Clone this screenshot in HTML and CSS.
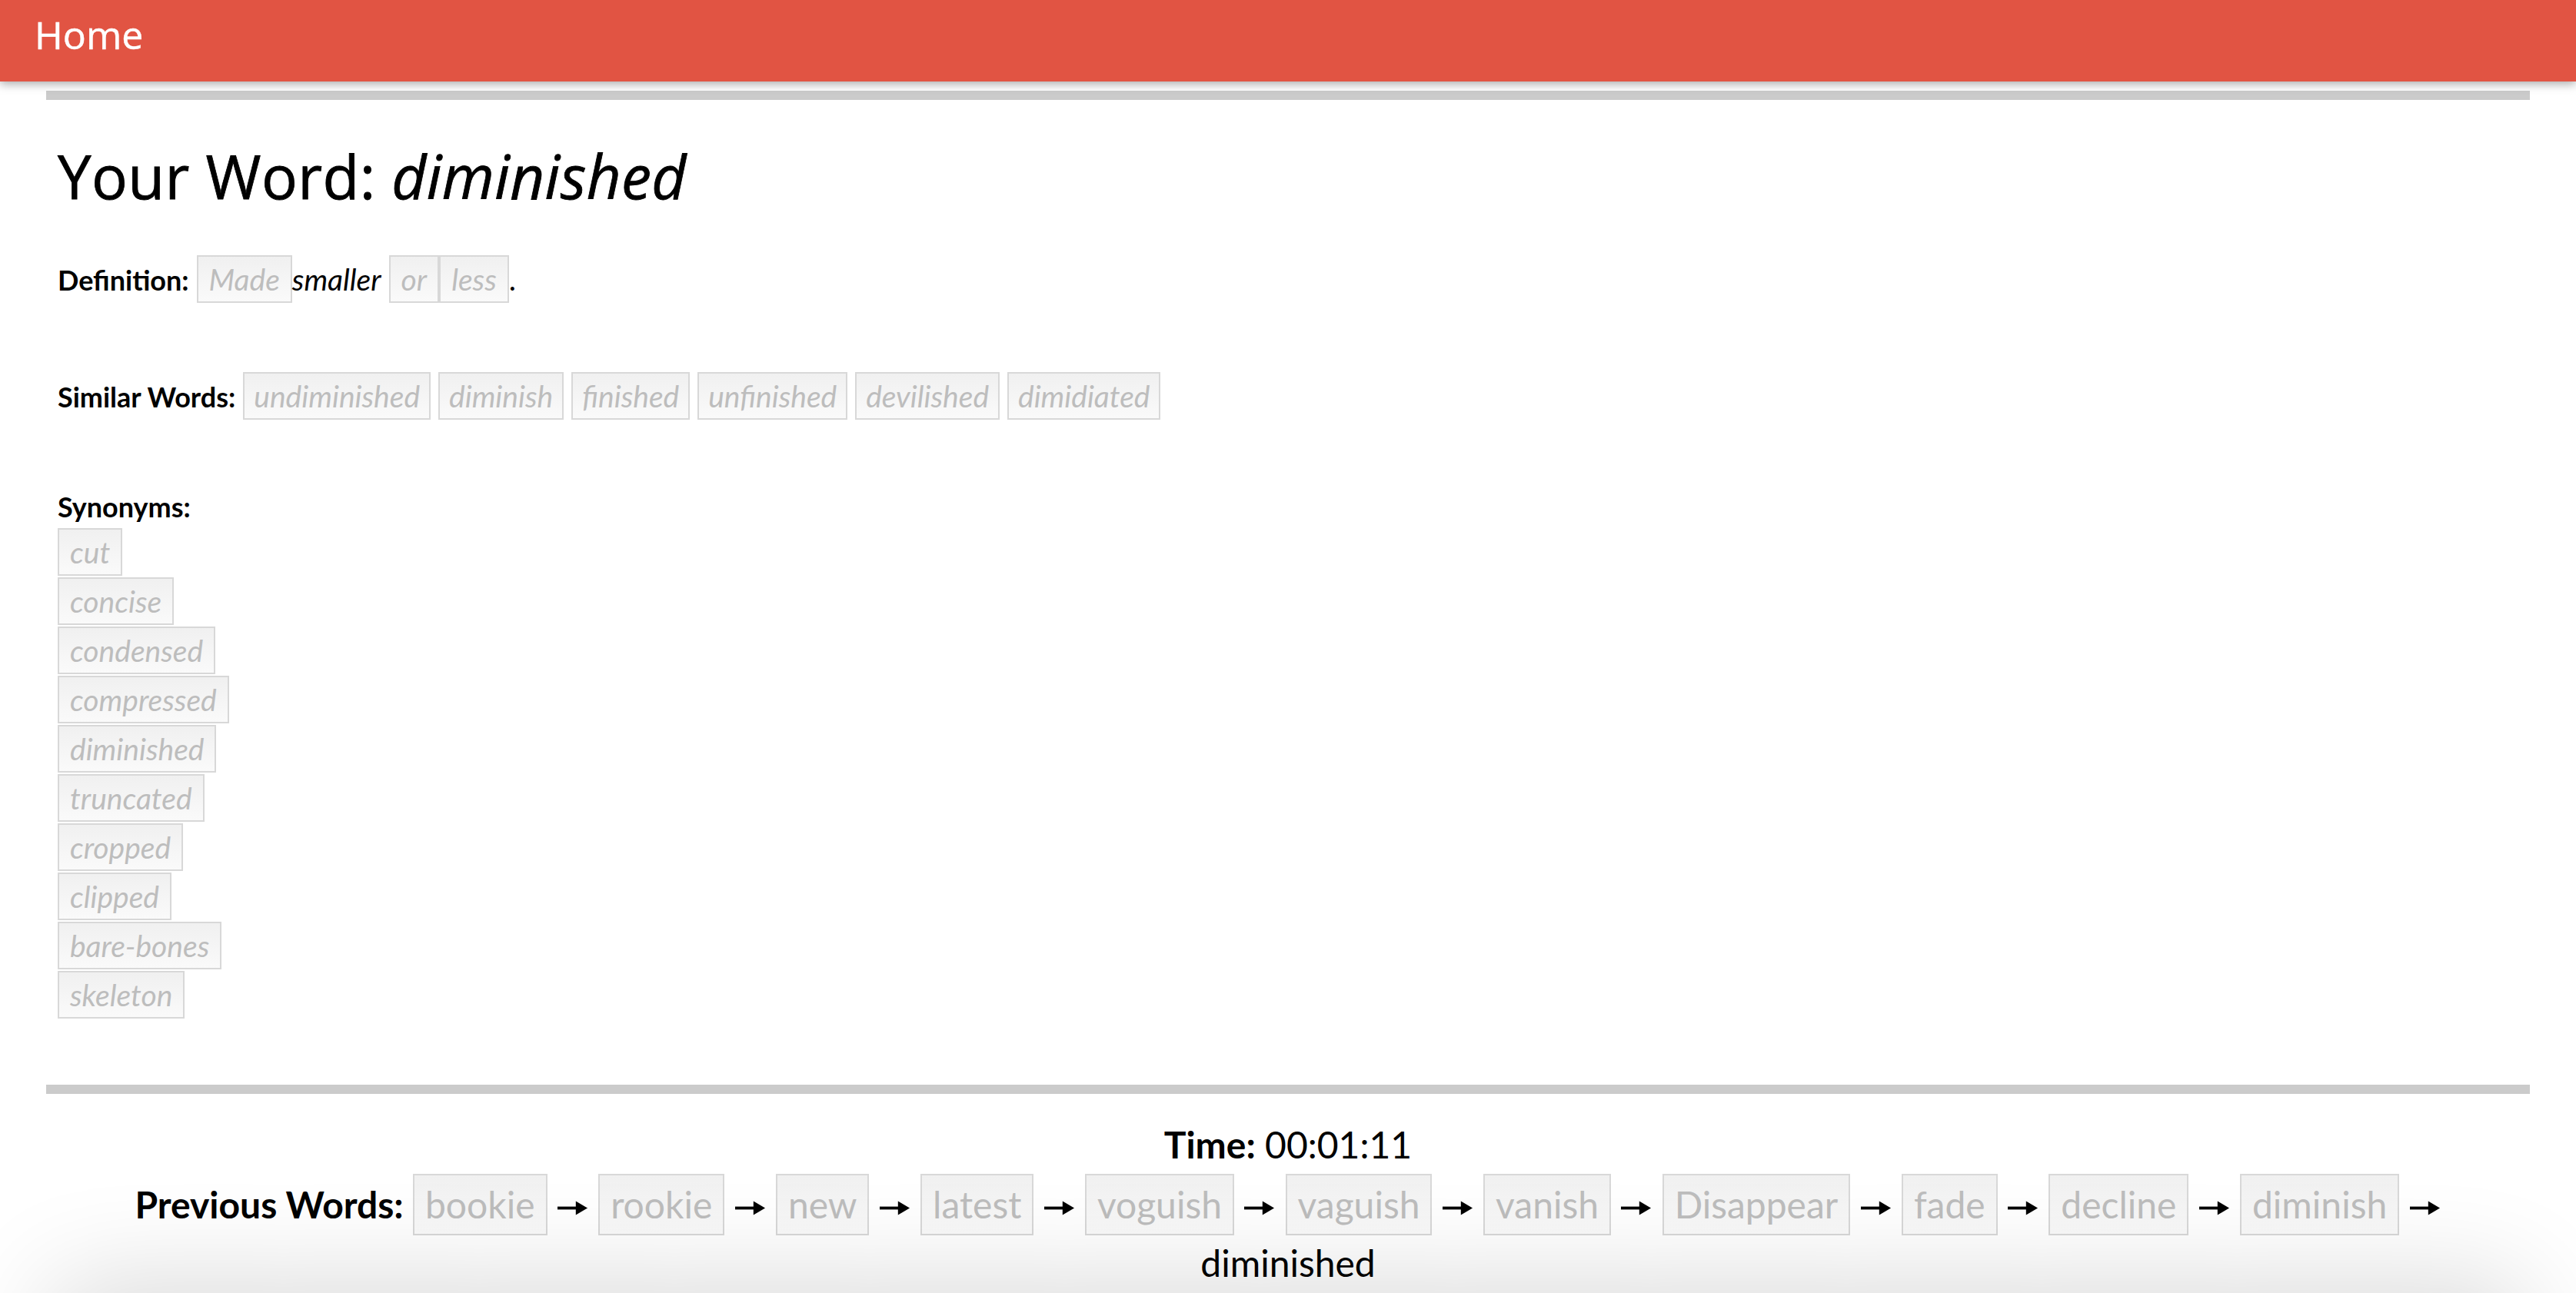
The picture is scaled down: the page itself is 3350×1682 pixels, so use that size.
FILE: index.html
```html
<!DOCTYPE html>
<html lang="en">
<head>
<meta charset="utf-8">
<title>Your Word: diminished</title>
<link rel="stylesheet" href="styles.css">
</head>
<body>
<header class="navbar"><a class="brand" href="#">Home</a></header>
<main class="container">
  <hr class="rule">
  <section class="content">
    <h1 class="title">Your Word: <em>diminished</em></h1>
    <div class="field definition"><strong class="label">Definition:</strong> <span class="chip">Made</span><em class="plain">smaller</em> <span class="chip">or</span><span class="chip">less</span>.</div>
    <div class="field similar"><strong class="label">Similar Words:</strong> <span class="chip">undiminished</span> <span class="chip">diminish</span> <span class="chip">finished</span> <span class="chip">unfinished</span> <span class="chip">devilished</span> <span class="chip">dimidiated</span></div>
    <div class="synonyms">
      <strong class="label syn-label">Synonyms:</strong>
      <div class="stack">
        <span class="chip">cut</span>
        <span class="chip">concise</span>
        <span class="chip">condensed</span>
        <span class="chip">compressed</span>
        <span class="chip">diminished</span>
        <span class="chip">truncated</span>
        <span class="chip">cropped</span>
        <span class="chip">clipped</span>
        <span class="chip">bare-bones</span>
        <span class="chip">skeleton</span>
      </div>
    </div>
  </section>
  <hr class="rule rule-bottom">
  <footer class="status">
    <div class="time"><strong>Time:</strong> 00:01:11</div>
    <div class="chain"><span class="chain-line"><strong>Previous Words:</strong> <span class="chip">bookie</span> <svg class="arrow" viewBox="0 0 42 24"><rect x="0" y="10" width="28" height="4"/><polygon points="25,2.5 41,12 25,21.5"/></svg> <span class="chip">rookie</span> <svg class="arrow" viewBox="0 0 42 24"><rect x="0" y="10" width="28" height="4"/><polygon points="25,2.5 41,12 25,21.5"/></svg> <span class="chip">new</span> <svg class="arrow" viewBox="0 0 42 24"><rect x="0" y="10" width="28" height="4"/><polygon points="25,2.5 41,12 25,21.5"/></svg> <span class="chip">latest</span> <svg class="arrow" viewBox="0 0 42 24"><rect x="0" y="10" width="28" height="4"/><polygon points="25,2.5 41,12 25,21.5"/></svg> <span class="chip">voguish</span> <svg class="arrow" viewBox="0 0 42 24"><rect x="0" y="10" width="28" height="4"/><polygon points="25,2.5 41,12 25,21.5"/></svg> <span class="chip">vaguish</span> <svg class="arrow" viewBox="0 0 42 24"><rect x="0" y="10" width="28" height="4"/><polygon points="25,2.5 41,12 25,21.5"/></svg> <span class="chip">vanish</span> <svg class="arrow" viewBox="0 0 42 24"><rect x="0" y="10" width="28" height="4"/><polygon points="25,2.5 41,12 25,21.5"/></svg> <span class="chip">Disappear</span> <svg class="arrow" viewBox="0 0 42 24"><rect x="0" y="10" width="28" height="4"/><polygon points="25,2.5 41,12 25,21.5"/></svg> <span class="chip">fade</span> <svg class="arrow" viewBox="0 0 42 24"><rect x="0" y="10" width="28" height="4"/><polygon points="25,2.5 41,12 25,21.5"/></svg> <span class="chip">decline</span> <svg class="arrow" viewBox="0 0 42 24"><rect x="0" y="10" width="28" height="4"/><polygon points="25,2.5 41,12 25,21.5"/></svg> <span class="chip">diminish</span> <svg class="arrow" viewBox="0 0 42 24"><rect x="0" y="10" width="28" height="4"/><polygon points="25,2.5 41,12 25,21.5"/></svg></span><br><span class="current">diminished</span></div>
  </footer>
</main>
<div class="page-shadow"></div>
</body>
</html>
```

FILE: styles.css
```css
html, body {
  margin: 0;
  padding: 0;
  background: #ffffff;
}

body {
  font-family: "Lato", "Liberation Sans", sans-serif;
  color: #000;
  overflow: hidden;
  height: 1682px;
}

.navbar {
  height: 106px;
  background: #e15443;
  box-shadow: 0 3px 12px rgba(0, 0, 0, 0.35);
  position: relative;
  z-index: 2;
  padding-left: 45px;
}

.brand {
  display: block;
  font-family: "Open Sans", "Noto Sans", sans-serif;
  font-weight: 400;
  font-size: 50px;
  line-height: 90px;
  color: #ffffff;
  text-decoration: none;
  -webkit-text-stroke: 0.5px #ffffff;
}

.container {
  margin: 0 60px;
}

.rule {
  border: 0;
  height: 12px;
  margin: 12px 0 0;
  background: #cbcbcb;
}

.content {
  padding: 0 15px;
}

.title {
  font-family: "Open Sans", "Noto Sans", sans-serif;
  font-weight: 400;
  font-size: 78px;
  line-height: 84px;
  margin: 57px 0 0;
  letter-spacing: 0.4px;
  -webkit-text-stroke: 0.8px #000;
}

.title em {
  font-style: italic;
}

.label {
  font-weight: 700;
  font-size: 36px;
}

.field {
  font-size: 39px;
  line-height: 64px;
  white-space: nowrap;
}

.definition {
  margin-top: 60px;
}

.similar {
  margin-top: 87px;
}

.plain {
  font-style: italic;
}

.chip {
  display: inline-block;
  font-style: italic;
  color: #bdbdbd;
  border: 2px solid #d8d8d8;
  background: linear-gradient(to bottom, #f0f0f0, #fafafa);
  padding: 7px 14px;
  line-height: 44px;
}

.similar .chip {
  padding: 7px 12px;
}

.synonyms {
  margin-top: 91px;
  font-size: 39px;
}

.syn-label {
  display: block;
  line-height: 40px;
}

.stack {
  display: flex;
  flex-direction: column;
  align-items: flex-start;
  gap: 2px;
  margin-top: 8px;
}

.rule-bottom {
  margin-top: 86px;
}

.status {
  text-align: center;
  font-size: 48px;
  padding: 0 15px;
}

.time {
  line-height: 56px;
  margin-top: 38px;
}

.chain {
  line-height: 72px;
  margin-top: 10px;
}

.chain-line {
  white-space: nowrap;
}

.chain .chip {
  font-style: normal;
  padding: 9px 14px;
  line-height: 58px;
}

.arrow {
  width: 40px;
  height: 23px;
  fill: #000;
  margin: 0 1px;
  vertical-align: 2px;
}

.page-shadow {
  position: fixed;
  left: 80px;
  right: 80px;
  top: 100%;
  height: 200px;
  box-shadow: 0 0 140px 10px rgba(0, 0, 0, 0.16);
  z-index: 3;
}
```
